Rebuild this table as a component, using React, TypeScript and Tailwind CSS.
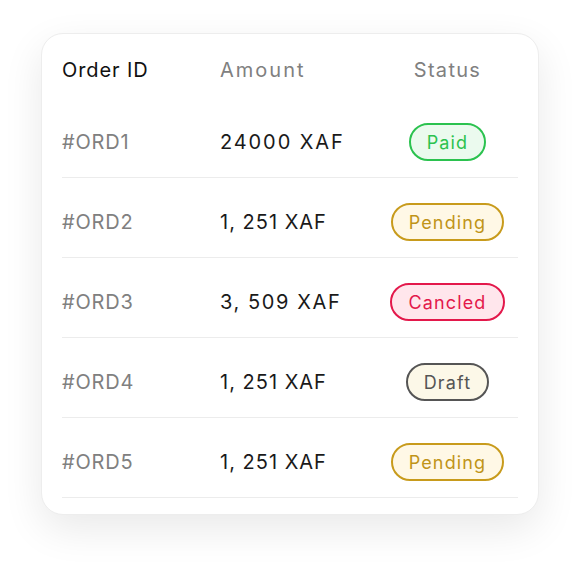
import React from "react";

type Status = "Paid" | "Pending" | "Cancled" | "Draft";

const rows: { id: string; amount: string; status: Status; track: string }[] = [
  { id: "#ORD1", amount: "24000 XAF", status: "Paid", track: "tracking-[1.9px]" },
  { id: "#ORD2", amount: "1, 251 XAF", status: "Pending", track: "tracking-[1px]" },
  { id: "#ORD3", amount: "3, 509 XAF", status: "Cancled", track: "tracking-[1.6px]" },
  { id: "#ORD4", amount: "1, 251 XAF", status: "Draft", track: "tracking-[1px]" },
  { id: "#ORD5", amount: "1, 251 XAF", status: "Pending", track: "tracking-[1px]" },
];

const badgeClass: Record<Status, string> = {
  Paid: "border-[#2bc24f] bg-[#ebfaee] text-[#2bc24f]",
  Pending: "border-[#c89b1c] bg-[#fff8e6] text-[#c09419]",
  Cancled: "border-[#e3184b] bg-[#ffe6ec] text-[#e3184b]",
  Draft: "border-[#555555] bg-[#fcf8e8] text-[#555555]",
};

function Badge({ status }: { status: Status }) {
  return (
    <span
      className={`inline-flex h-[38px] items-center rounded-full border-2 px-[16px] text-[18px] tracking-[1.15px] ${badgeClass[status]}`}
    >
      {status}
    </span>
  );
}

export default function App() {
  return (
    <div
      className="min-h-[564px] w-[580px] bg-white pt-[33px]"
      style={{ fontFamily: "Inter, 'Noto Sans', sans-serif" }}
    >
      <div className="mx-auto w-[498px] rounded-[22px] border border-[#ededed] bg-white px-5 pb-[16px] pt-[16px] shadow-[0_14px_40px_rgba(0,0,0,0.09)]">
        <div className="mb-[8px] grid h-[40px] grid-cols-[158px_157px_1fr] items-center text-[20px]">
          <div className="tracking-[0.9px] text-[#111111]">Order ID</div>
          <div className="tracking-[2px] text-[#808080]">Amount</div>
          <div className="text-center tracking-[1.3px] text-[#808080]">Status</div>
        </div>
        {rows.map((r) => (
          <div
            key={r.id + r.status}
            className="grid grid-cols-[158px_157px_1fr] items-center border-b border-[#ececec] pb-[16px] pt-[25px] text-[20px]"
          >
            <div className="tracking-[0.8px] text-[#808080]">{r.id}</div>
            <div className={`${r.track} text-[#1a1a1a]`}>{r.amount}</div>
            <div className="flex justify-center">
              <Badge status={r.status} />
            </div>
          </div>
        ))}
      </div>
    </div>
  );
}
